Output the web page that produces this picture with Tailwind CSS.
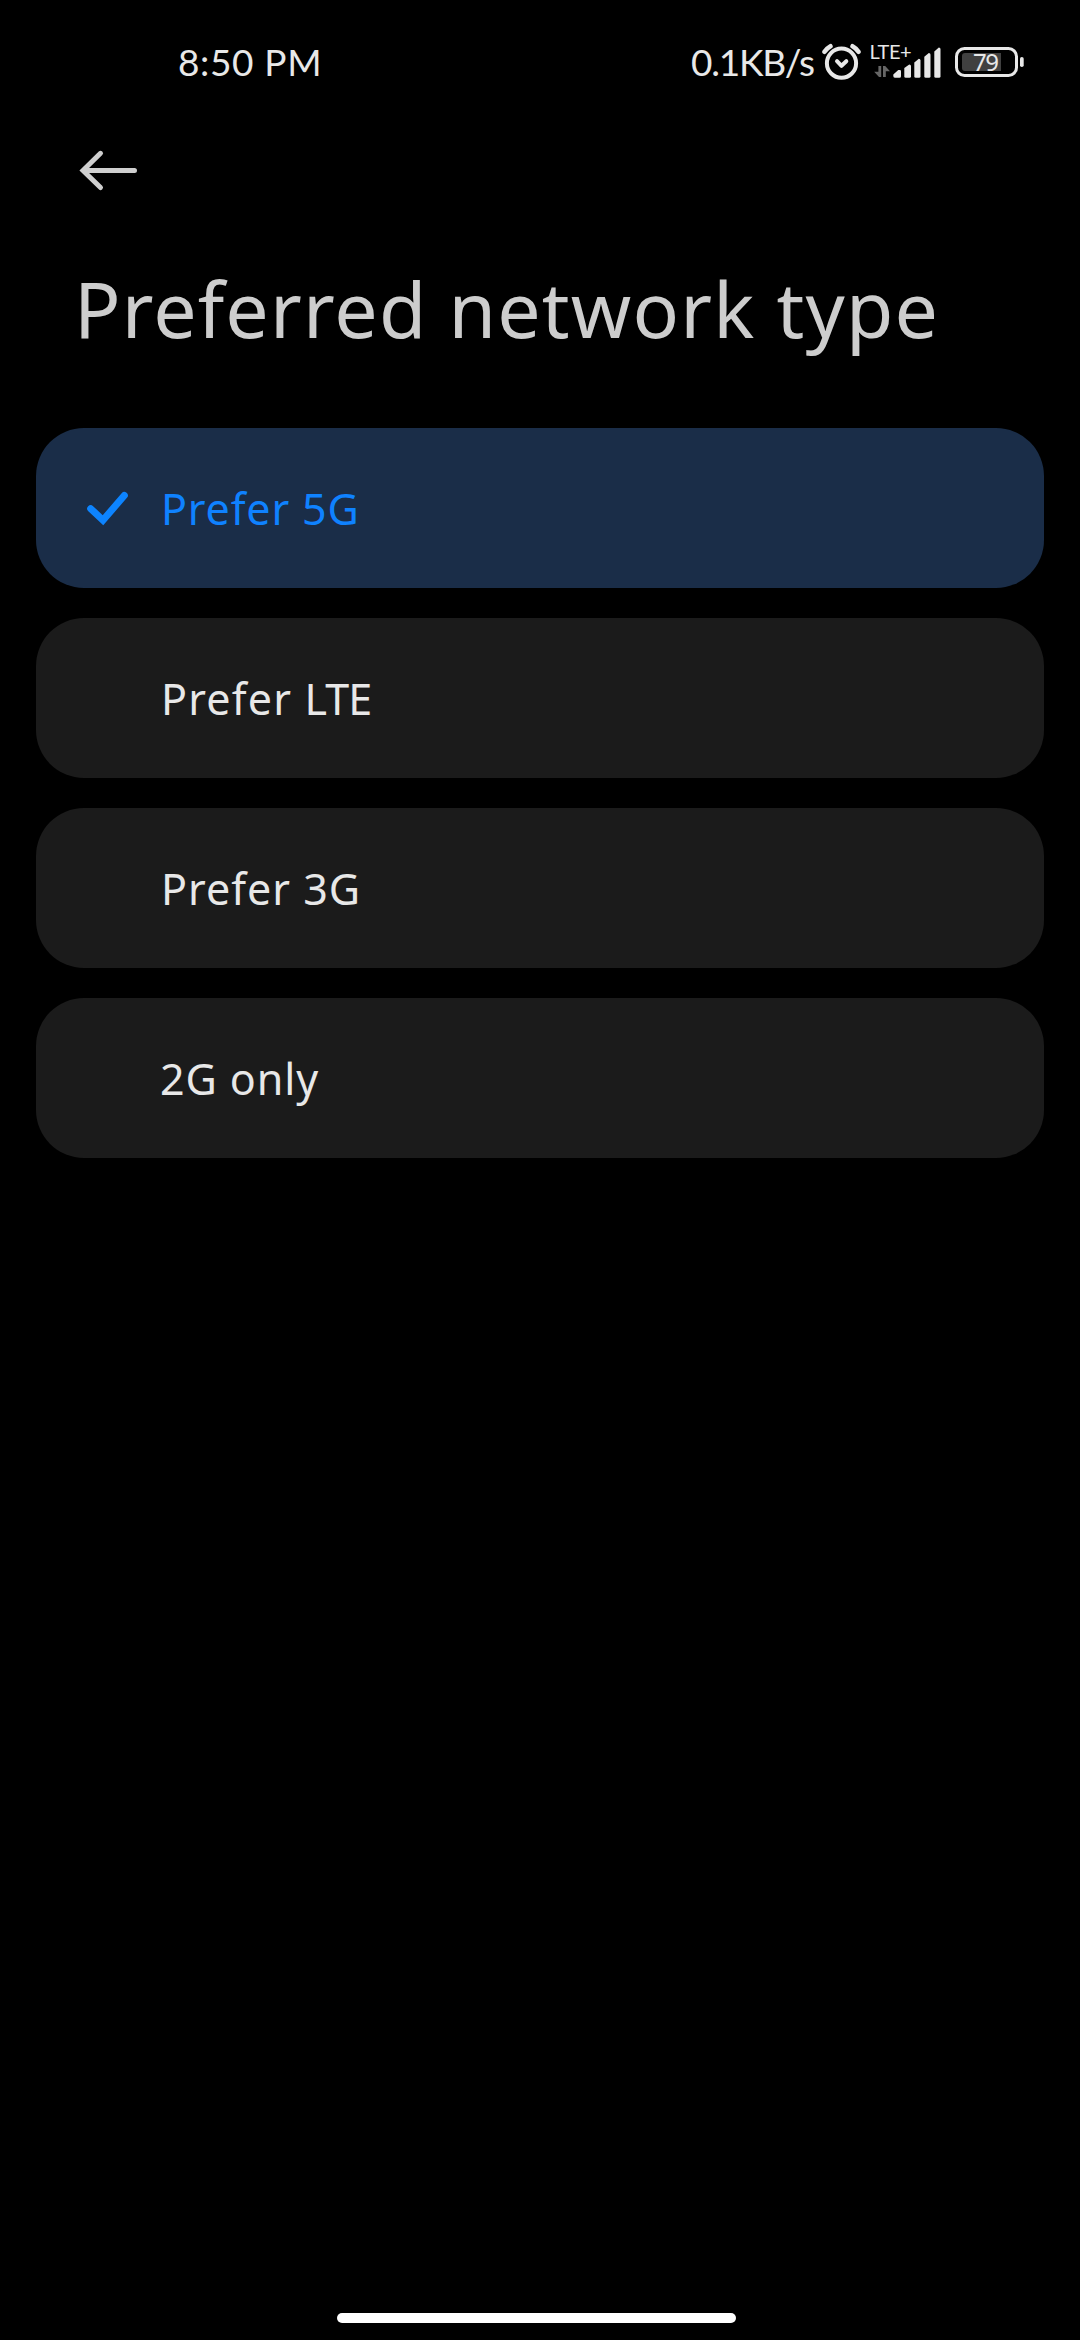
<!DOCTYPE html>
<html lang="en">
<head>
<meta charset="utf-8">
<title>Preferred network type</title>
<script src="https://cdn.jsdelivr.net/npm/@tailwindcss/browser@4"></script>
</head>
<body class="bg-black">
<div class="w-[1080px] h-[2340px] bg-black overflow-hidden flex flex-col font-['Noto_Sans',sans-serif] text-[#e8e8e8]">

  <header class="h-[123px] shrink-0 flex justify-between pl-[178px] pr-[56px] font-['Lato',sans-serif] text-[37px] leading-[124px] whitespace-nowrap">
    <span class="tracking-[0.65px]">8:50 PM</span>
    <div class="flex">
      <span class="tracking-[-1.25px] w-[131px]">0.1KB/s</span>
      <!-- alarm, signal and battery -->
      <svg class="w-[40px] h-[123px]" viewBox="822 0 40 123" fill="none" stroke="#e8e8e8" stroke-width="4" stroke-linecap="round" stroke-linejoin="round">
        <circle cx="841.5" cy="63.2" r="14.6"/>
        <path stroke-width="4.500" d="M824.500 51.800q2.300-3.600 6-5.600M858.500 51.800q-2.300-3.600-6-5.600"/>
        <path d="M837 61.2l4.5 4.6 4.8-4.6"/>
      </svg>
      <div class="relative w-[93px] h-[123px]">
        <svg class="w-[93px] h-[123px]" viewBox="862 0 93 123">
          <path fill="#666" d="M881.200 66v11h-2.200l-4.800-5.200h4.200V66zM883 77V66h2.200l4.800 5.200h-4.200V77z"/>
          <g fill="#e8e8e8">
            <path d="M893.300 76v-1.500l5-4.500h1.500q1.200 0 1.200 1.200v5q0 1.500-1.500 1.500h-4.700q-1.500 0-1.500-1.700z"/>
            <path d="M904.300 68l5-3.600q1.700 0 1.700 1.600v10.200q0 1.500-1.500 1.500h-3.700q-1.500 0-1.500-1.500z"/>
            <path d="M914.300 62.500l4.500-3.700q1.700 0 1.700 1.600v15.800q0 1.500-1.500 1.500h-3.200q-1.500 0-1.500-1.500z"/>
            <path d="M924.300 56.800l4.500-3.700q1.700 0 1.700 1.600v21.500q0 1.500-1.500 1.500h-3.200q-1.500 0-1.500-1.500z"/>
            <path d="M934.300 51.500l4.500-4q1.700 0 1.700 1.600v27.100q0 1.500-1.500 1.500h-3.200q-1.500 0-1.500-1.500z"/>
          </g>
        </svg>
        <span class="absolute left-[7.500px] top-[38px] text-[20px] leading-[26px] tracking-[-0.4px]">LTE+</span>
      </div>
      <div class="relative w-[69px] h-[123px]">
        <svg class="w-[69px] h-[123px]" viewBox="955 0 69 123">
          <rect x="956.500" y="48.500" width="60" height="27" rx="8" fill="none" stroke="#e8e8e8" stroke-width="3"/>
          <path fill="#404040" d="M965 53h36v18h-36q-3 0-3-3V56q0-3 3-3z"/>
          <rect x="1020" y="57" width="3.700" height="10" rx="1.800" fill="#e8e8e8"/>
        </svg>
        <span class="absolute left-[18px] top-[47px] font-['Noto_Sans',sans-serif] text-[24px] leading-[30px] tracking-[-1.500px]">79</span>
      </div>
    </div>
  </header>

  <nav class="h-[94px] shrink-0 pl-[78px] pt-[25px]">
    <svg class="w-[62px] h-[44px]" viewBox="78 148 62 44" fill="none" stroke="#cfcfcf" stroke-width="5" stroke-linecap="round" stroke-linejoin="miter">
      <path d="M100.500 153.300L83 170.500L100.500 187.500M84 170.500H134.500"/>
    </svg>
  </nav>

  <h1 class="h-[211px] shrink-0 pl-[74px] text-[77px] leading-[184px] tracking-[1.150px] whitespace-nowrap text-[#cdcdcd]">Preferred network type</h1>

  <ul class="flex flex-col gap-[30px] px-[36px] text-[43px] leading-[161px] whitespace-nowrap">
    <li class="h-[160px] rounded-[48px] bg-[#1a2d48] text-[#0f82ff] flex items-center pl-[50px]">
      <svg class="w-[44px] h-[40px] mr-[31px]" viewBox="86 488 44 40" fill="none" stroke="#0d84ff" stroke-width="7" stroke-linecap="round" stroke-linejoin="miter">
        <path d="M90.700 508.700L103 520.200L124.300 495.500"/>
      </svg>
      <span class="tracking-[0.850px]">Prefer 5G</span>
    </li>
    <li class="h-[160px] rounded-[48px] bg-[#1b1b1b] pl-[125px] tracking-[1.200px]">Prefer <span class="tracking-[-1px]">LTE</span></li>
    <li class="h-[160px] rounded-[48px] bg-[#1b1b1b] pl-[125px] tracking-[1px]">Prefer 3G</li>
    <li class="h-[160px] rounded-[48px] bg-[#1b1b1b] pl-[124px] tracking-[0.900px]">2G only</li>
  </ul>

  <div class="mt-auto mb-[17px] ml-[337px] w-[399px] h-[10px] shrink-0 rounded-[5px] bg-white"></div>
</div>
</body></html>
